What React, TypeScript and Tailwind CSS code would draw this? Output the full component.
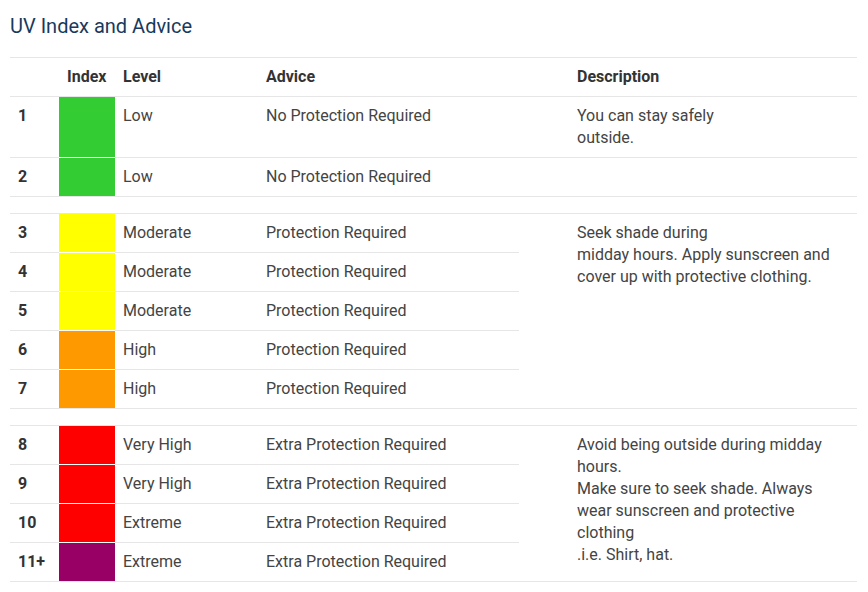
type Row = {
  idx: string;
  color: string;
  level: string;
  advice: string;
  first?: boolean;
  desc?: React.ReactNode;
  span?: number;
  skipDesc?: boolean;
};

type Group = Row[];

const GROUPS: Group[] = [
  [
    {
      idx: "1",
      color: "bg-[#33cc33]",
      level: "Low",
      advice: "No Protection Required",
      first: true,
      desc: (
        <>
          You can stay safely
          <br />
          outside.
        </>
      ),
    },
    { idx: "2", color: "bg-[#33cc33]", level: "Low", advice: "No Protection Required", desc: "" },
  ],
  [
    {
      idx: "3",
      color: "bg-[#ffff00]",
      level: "Moderate",
      advice: "Protection Required",
      first: true,
      span: 5,
      desc: (
        <>
          Seek shade during
          <br />
          midday hours. Apply sunscreen and cover up with protective clothing.
        </>
      ),
    },
    { idx: "4", color: "bg-[#ffff00]", level: "Moderate", advice: "Protection Required", skipDesc: true },
    { idx: "5", color: "bg-[#ffff00]", level: "Moderate", advice: "Protection Required", skipDesc: true },
    { idx: "6", color: "bg-[#ff9900]", level: "High", advice: "Protection Required", skipDesc: true },
    { idx: "7", color: "bg-[#ff9900]", level: "High", advice: "Protection Required", skipDesc: true },
  ],
  [
    {
      idx: "8",
      color: "bg-[#ff0000]",
      level: "Very High",
      advice: "Extra Protection Required",
      first: true,
      span: 4,
      desc: (
        <>
          Avoid being outside during midday hours.
          <br />
          Make sure to seek shade. Always wear sunscreen and protective clothing
          <br />
          .i.e. Shirt, hat.
        </>
      ),
    },
    { idx: "9", color: "bg-[#ff0000]", level: "Very High", advice: "Extra Protection Required", skipDesc: true },
    { idx: "10", color: "bg-[#ff0000]", level: "Extreme", advice: "Extra Protection Required", skipDesc: true },
    { idx: "11+", color: "bg-[#990066]", level: "Extreme", advice: "Extra Protection Required", skipDesc: true },
  ],
];

const cell = "border-t border-[#e6e6e6] px-2 py-2 align-top";

export default function App() {
  return (
    <div className="min-h-[592px] bg-white px-[10px] pt-[13px] font-['Roboto',sans-serif] text-[16px] leading-[22px] text-[#444]">
      <h2 className="text-[20px] leading-[26px] text-[#173a5e] mb-[18px]">UV Index and Advice</h2>
      <table className="w-[847px] border-separate border-spacing-0 table-fixed">
        <colgroup>
          <col className="w-[49px]" />
          <col className="w-[56px]" />
          <col className="w-[143px]" />
          <col className="w-[261px]" />
          <col className="w-[338px]" />
        </colgroup>
        <thead>
          <tr className="font-bold text-[#333] text-left">
            <th className={cell}></th>
            <th className={cell}>Index</th>
            <th className={cell}>Level</th>
            <th className={cell}>Advice</th>
            <th className={`${cell} pl-[58px]`}>Description</th>
          </tr>
        </thead>
        <tbody>
          {GROUPS.map((group, g) => (
            <>
              {g > 0 && (
                <tr key={`sep-${g}`}>
                  <td colSpan={5} className="border-t border-[#e6e6e6] h-[17px] p-0"></td>
                </tr>
              )}
              {group.map((r, i) => {
                const last = g === GROUPS.length - 1 && i === group.length - 1;
                const b = last ? " border-b" : "";
                return (
                  <tr key={r.idx}>
                    <td className={`${cell}${b} font-bold text-[#333]`}>{r.idx}</td>
                    <td
                      className={`border-t p-0 ${r.color} ${r.first ? "border-[#e6e6e6]" : "border-white"}${last ? " border-b border-b-[#e6e6e6]" : ""}`}
                    ></td>
                    <td className={`${cell}${b}`}>{r.level}</td>
                    <td className={`${cell}${b}`}>{r.advice}</td>
                    {!r.skipDesc && (
                      <td rowSpan={r.span ?? 1} className={`${cell} pl-[58px] border-b-[#e6e6e6]${r.span && g === GROUPS.length - 1 ? " border-b" : ""}`}>
                        {r.desc}
                      </td>
                    )}
                  </tr>
                );
              })}
            </>
          ))}
        </tbody>
      </table>
    </div>
  );
}
